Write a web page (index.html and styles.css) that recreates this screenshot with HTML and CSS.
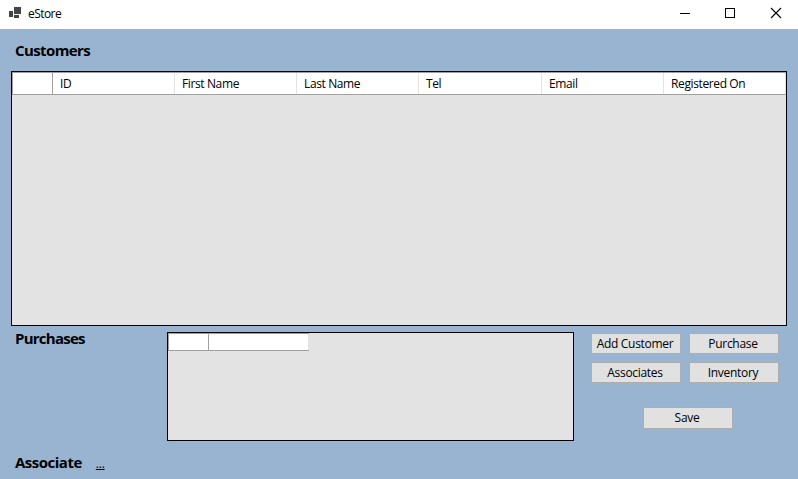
FILE: index.html
```html
<!DOCTYPE html>
<html lang="en">
<head>
<meta charset="utf-8">
<title>eStore</title>
<link rel="stylesheet" href="styles.css">
</head>
<body>
<header class="titlebar">
  <svg class="app-icon" width="13" height="12" viewBox="0 0 13 12" shape-rendering="crispEdges" fill="#444"><path d="M0 4h4v6H0zM5 0h7v7H5zM5 8h5v3H5z"/></svg>
  <span class="app-name">eStore</span>
  <div class="controls">
    <svg width="46" height="29" viewBox="0 0 46 29" shape-rendering="crispEdges"><path d="M18 13h10v1H18z"/></svg>
    <svg width="46" height="29" viewBox="0 0 46 29" shape-rendering="crispEdges"><path d="M17.500 8.500h9v9h-9z" fill="none" stroke="#000"/></svg>
    <svg width="44" height="29" viewBox="0 0 44 29"><path d="M17 8l10 10M27 8L17 18" fill="none" stroke="#000" stroke-width="1.100"/></svg>
  </div>
</header>
<main class="form">
  <h2 class="heading customers-title">Customers</h2>
  <section class="grid customers">
    <div class="grid-head">
      <div class="corner"></div>
      <div class="col"><span>ID</span></div>
      <div class="col"><span>First Name</span></div>
      <div class="col"><span>Last Name</span></div>
      <div class="col"><span>Tel</span></div>
      <div class="col"><span>Email</span></div>
      <div class="col"><span>Registered On</span></div>
    </div>
  </section>
  <section class="lower">
    <h2 class="heading purchases-title">Purchases</h2>
    <div class="grid purchases">
      <div class="grid-head small">
        <div class="corner"></div>
        <div class="col"></div>
      </div>
    </div>
    <div class="actions">
      <button>Add Customer</button>
      <button>Purchase</button>
      <button>Associates</button>
      <button>Inventory</button>
      <button class="save">Save</button>
    </div>
  </section>
  <footer class="associate">
    <h2 class="heading associate-title">Associate</h2>
    <span class="value">...</span>
  </footer>
</main>
</body>
</html>
```
FILE: styles.css
```css
* { box-sizing: border-box; }
body {
  margin: 0;
  width: 798px;
  height: 479px;
  overflow: hidden;
  background: #99b4d1;
  color: #000;
  font: 12px/16px "Open Sans", "Noto Sans", sans-serif;
  letter-spacing: -0.38px;
}
.titlebar {
  display: flex;
  height: 29px;
  padding-left: 9px;
  background: #fff;
}
.app-icon { margin-top: 7px; }
.app-name { margin: 6px 0 0 6px; letter-spacing: -0.55px; }
.controls { display: flex; margin-left: auto; }
.form { padding: 0 11px; }
.heading {
  margin: 0 0 0 4px;
  font-size: 15px;
  line-height: 20px;
  font-weight: 700;
  letter-spacing: -0.6px;
}
.customers-title { padding-top: 11px; height: 42px; }
.grid { border: 1px solid #000; background: #e3e3e3; }
.customers { width: 776px; height: 255px; }
.grid-head {
  display: grid;
  grid-template-columns: 41px 122px 122px 122px 123px 122px 1fr;
  height: 23px;
  border-top: 1px solid #a0a0a0;
  border-bottom: 1px solid #a0a0a0;
  background: #fff;
}
.corner { border-left: 1px solid #a0a0a0; border-right: 1px solid #a0a0a0; }
.col { padding: 3px 0 0 7px; border-right: 1px solid #e3e3e3; white-space: nowrap; }
.lower {
  display: grid;
  grid-template-columns: 156px 407px 1fr;
  height: 115px;
  padding-top: 6px;
}
.purchases-title { margin-top: -4px; letter-spacing: -0.75px; }
.purchases { height: 109px; }
.small { grid-template-columns: 41px 100px; width: 141px; height: 18px; }
.actions {
  display: grid;
  grid-template-columns: 90px 90px;
  grid-template-rows: 21px 21px 22px;
  column-gap: 8px;
  row-gap: 8px;
  align-content: start;
  padding: 1px 0 0 17px;
}
button {
  padding: 0 2px 0 0;
  border: 1px solid #adadad;
  background: #e1e1e1;
  color: #000;
  font: inherit;
  letter-spacing: -0.3px;
  white-space: nowrap;
}
.save { grid-column: 1 / 3; width: 90px; height: 22px; margin: 16px 0 0 52px; }
.associate { display: flex; padding-top: 11px; }
.associate-title { letter-spacing: -0.5px; }
.value { margin: 4px 0 0 14px; letter-spacing: -0.2px; text-decoration: underline; }
```
